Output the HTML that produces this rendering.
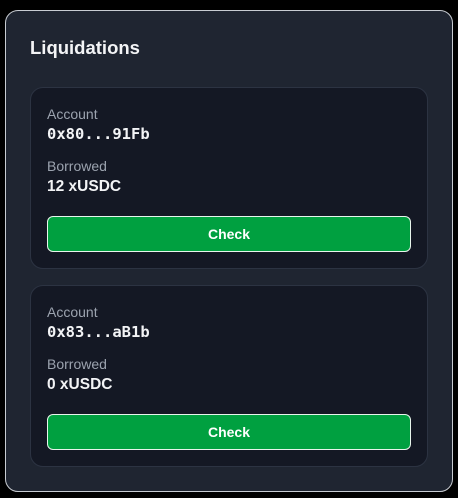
<!DOCTYPE html>
<html><head><meta charset="utf-8"><style>
*{box-sizing:border-box;margin:0;padding:0}
body{width:458px;height:498px;background:#000;font-family:"Liberation Sans",sans-serif;position:relative;overflow:hidden}
.outer{position:absolute;left:5px;top:10px;width:448px;height:482px;background:#1f2531;border:1px solid #c8ccd2;border-radius:13px}
h1{position:absolute;left:24px;top:26px;font-size:18.5px;font-weight:bold;color:#f3f4f6}
.card{position:absolute;left:24px;width:398px;height:182px;background:#141824;border:1px solid #2c3342;border-radius:13px}
.lbl{position:absolute;left:16px;font-size:14px;color:#9ca3af}
.addr{position:absolute;left:16px;font-family:"DejaVu Sans Mono","Liberation Mono",monospace;font-size:15.5px;font-weight:bold;color:#f3f4f6}
.val{position:absolute;left:16px;font-size:15.5px;font-weight:bold;color:#f3f4f6}
.btn{position:absolute;left:16px;top:128px;width:364px;height:36px;background:#00a040;border:1px solid #e8f5ec;border-radius:6px;color:#fff;font-size:14px;font-weight:bold;text-align:center;line-height:34px}
</style></head><body>
<div class="outer">
<h1>Liquidations</h1>
<div class="card" style="top:76px">
<div class="lbl" style="top:18px">Account</div>
<div class="addr" style="top:37px">0x80...91Fb</div>
<div class="lbl" style="top:70px">Borrowed</div>
<div class="val" style="top:90px">12 xUSDC</div>
<div class="btn">Check</div>
</div>
<div class="card" style="top:274px">
<div class="lbl" style="top:18px">Account</div>
<div class="addr" style="top:37px">0x83...aB1b</div>
<div class="lbl" style="top:70px">Borrowed</div>
<div class="val" style="top:90px">0 xUSDC</div>
<div class="btn">Check</div>
</div>
</div>
</body></html>
